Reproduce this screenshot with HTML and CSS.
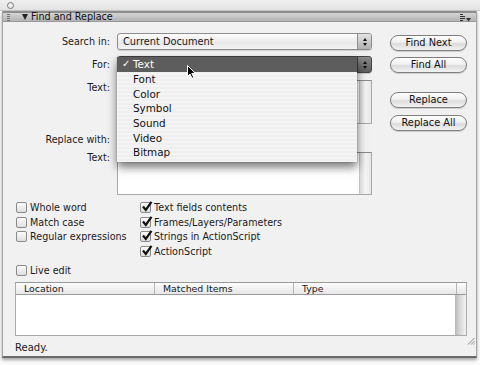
FILE: index.html
```html
<!DOCTYPE html>
<html>
<head>
<meta charset="utf-8">
<link rel="stylesheet" href="styles.css">
</head>
<body>
<div class="topstrip"><span class="dot"></span></div>
<div class="panel">
  <div class="titlebar">
    <span class="grip"></span>
    <span class="tri"></span>
    <span class="title">Find and Replace</span>
    <svg class="menuicon" width="11" height="8" viewBox="0 0 11 8">
      <path d="M0 0.5H3M0 2.5H5M0 4.5H5M0 6.5H3" stroke="#333" stroke-width="1"/>
      <path d="M6 4H11L8.5 7.5Z" fill="#333"/>
    </svg>
  </div>
  <div class="content">
    <div class="top">
      <div class="form">
        <div class="row r1"><span class="label">Search in:</span><div class="select"><span class="val">Current Document</span><span class="stepper"><i class="up"></i><i class="down"></i></span></div></div>
        <div class="row r2"><span class="label">For:</span><div class="select dark"><span class="val"></span><span class="stepper"><i class="up"></i><i class="down"></i></span></div></div>
        <div class="row r3"><span class="label">Text:</span><div class="textarea"><span class="vscroll"></span></div></div>
        <div class="row r4"><span class="label">Replace with:</span></div>
        <div class="row r5"><span class="label">Text:</span><div class="textarea"><span class="vscroll"></span></div></div>
        <div class="menu">
          <div class="item sel"><span class="check">✓</span>Text</div>
          <div class="item">Font</div>
          <div class="item">Color</div>
          <div class="item">Symbol</div>
          <div class="item">Sound</div>
          <div class="item">Video</div>
          <div class="item">Bitmap</div>
          <svg class="cursor" width="9" height="14" viewBox="0 0 9 14">
            <path d="M0.5 0.5V11.5L3 9L5 13.3L6.8 12.5L4.8 8.4H8.3Z" fill="#000" stroke="#fff" stroke-width="1"/>
          </svg>
        </div>
      </div>
      <div class="buttons">
        <div class="btn b1">Find Next</div>
        <div class="btn b2">Find All</div>
        <div class="btn b3">Replace</div>
        <div class="btn b4">Replace All</div>
      </div>
    </div>
    <div class="checks">
      <div class="col left">
        <div class="cb"><span class="box"></span>Whole word</div>
        <div class="cb"><span class="box"></span>Match case</div>
        <div class="cb"><span class="box"></span>Regular expressions</div>
      </div>
      <div class="col right">
        <div class="cb"><span class="box on"><svg width="12" height="12" viewBox="0 0 12 12"><path d="M2 5.5L4.8 9L10.5 0.8" fill="none" stroke="#111" stroke-width="2.2"/></svg></span>Text fields contents</div>
        <div class="cb"><span class="box on"><svg width="12" height="12" viewBox="0 0 12 12"><path d="M2 5.5L4.8 9L10.5 0.8" fill="none" stroke="#111" stroke-width="2.2"/></svg></span>Frames/Layers/Parameters</div>
        <div class="cb"><span class="box on"><svg width="12" height="12" viewBox="0 0 12 12"><path d="M2 5.5L4.8 9L10.5 0.8" fill="none" stroke="#111" stroke-width="2.2"/></svg></span>Strings in ActionScript</div>
        <div class="cb"><span class="box on"><svg width="12" height="12" viewBox="0 0 12 12"><path d="M2 5.5L4.8 9L10.5 0.8" fill="none" stroke="#111" stroke-width="2.2"/></svg></span>ActionScript</div>
      </div>
    </div>
    <div class="live"><div class="cb"><span class="box"></span>Live edit</div></div>
    <div class="table">
      <div class="thead">
        <span class="th c1">Location</span>
        <span class="th c2">Matched Items</span>
        <span class="th c3">Type</span>
        <span class="th c4"></span>
      </div>
      <div class="tbody"><span class="tscroll"></span></div>
    </div>
    <div class="status">Ready.</div>
    <svg class="resize" width="8" height="8" viewBox="0 0 8 8">
      <path d="M7.5 1L1 7.5M7.5 4L4 7.5M7.5 6.5L6.5 7.5" stroke="#888" stroke-width="1"/>
    </svg>
  </div>
</div>
</body>
</html>
```

FILE: styles.css
```css
* { box-sizing: border-box; }
html, body {
  margin: 0;
  padding: 0;
  background: #fafafa;
  font-family: "DejaVu Sans", "Liberation Sans", sans-serif;
  font-size: 9.6px;
  color: #1a1a1a;
  width: 480px;
  height: 365px;
  overflow: hidden;
}
.topstrip {
  height: 11px;
  background: linear-gradient(#f0f0f0, #e2e2e2);
  border-bottom: 1px solid #c8c8c8;
  padding: 2px 0 0 7px;
}
.dot {
  display: block;
  width: 7px;
  height: 7px;
  border-radius: 50%;
  border: 1px solid #777;
  background: #eee;
}
.panel {
  margin: 0 3px 0 2px;
  width: 475px;
  height: 347px;
  background: #f1f1f1;
  border-left: 1px solid #a4a4a4;
  border-right: 1px solid #a4a4a4;
  border-bottom: 2px solid #6a6a6a;
  box-shadow: 0 2px 3px rgba(0,0,0,0.35);
}
.titlebar {
  height: 11px;
  border-top: 2px solid #8c8c8c;
  background: linear-gradient(#d4d4d4, #b4b4b4);
  border-bottom: 1px solid #9a9a9a;
  display: flex;
  align-items: center;
  padding-left: 4px;
  position: relative;
}
.grip {
  width: 3px;
  height: 7px;
  background: repeating-linear-gradient(#777 0 1px, transparent 1px 2px);
  margin-right: 12px;
}
.tri {
  width: 0;
  height: 0;
  border-left: 3.5px solid transparent;
  border-right: 3.5px solid transparent;
  border-top: 6px solid #222;
  margin-right: 3px;
}
.title {
  font-size: 9.6px;
  color: #111;
  line-height: 8px;
}
.menuicon {
  position: absolute;
  right: 5px;
  top: 1px;
}
.content {
  position: relative;
  height: 324px;
}
.top {
  display: flex;
  padding-top: 11px;
}
.form {
  position: relative;
  width: 369px;
}
.row {
  display: flex;
  align-items: flex-start;
}
.label {
  width: 107px;
  text-align: right;
  flex: none;
  margin-right: 7px;
  line-height: 12px;
}
.r1, .r2 { height: 17px; align-items: center; }
.r2 { margin-top: 6px; }
.r3 { margin-top: 7px; }
.r3 .label { padding-top: 2px; }
.r4 { height: 28px; align-items: center; padding-top: 4px; }
.r5 .label { padding-top: 0px; margin-top: 0; }
.r5 .label { line-height: 12px; padding-top: 0; }
.select {
  width: 255px;
  height: 17px;
  border: 1px solid #8d8d8d;
  border-radius: 3px;
  background: linear-gradient(#ffffff, #e8e8e8 60%, #f4f4f4);
  display: flex;
  align-items: center;
  box-shadow: 0 1px 1px rgba(0,0,0,0.15);
}
.select .val {
  flex: 1;
  padding-left: 5px;
  font-size: 9.8px;
}
.select.dark {
  background: linear-gradient(#6a6a6a, #555);
  border-color: #444;
}
.stepper {
  width: 14px;
  height: 15px;
  border-left: 1px solid #8d8d8d;
  border-radius: 0 2px 2px 0;
  background: linear-gradient(#e4e4e4, #b0b0b0);
  display: flex;
  flex-direction: column;
  align-items: center;
  justify-content: center;
  gap: 2px;
}
.select.dark .stepper {
  background: linear-gradient(#8a8a8a, #5e5e5e);
  border-left-color: #444;
}
.up, .down {
  display: block;
  width: 0;
  height: 0;
  border-left: 2px solid transparent;
  border-right: 2px solid transparent;
}
.up { border-bottom: 3px solid #111; }
.down { border-top: 3px solid #111; }
.textarea {
  width: 255px;
  height: 44px;
  background: #fff;
  border: 1px solid #a8a8a8;
  border-top-color: #8a8a8a;
  display: flex;
  justify-content: flex-end;
}
.r5 .textarea { height: 43px; }
.vscroll {
  width: 12px;
  height: 100%;
  border-left: 1px solid #c4c4c4;
  background: linear-gradient(90deg, #d8d8d8, #f4f4f4 50%, #e6e6e6);
}
.menu {
  position: absolute;
  left: 114px;
  top: 24px;
  width: 240px;
  height: 105px;
  background: repeating-linear-gradient(#f4f4f4 0 2px, #efefef 2px 4px);
  box-shadow: 0 5px 9px rgba(0,0,0,0.55), 0 0 1px rgba(0,0,0,0.4);
  padding-top: 0;
}
.item {
  height: 14.7px;
  line-height: 14.7px;
  padding-left: 16px;
  font-size: 10.4px;
  color: #111;
  position: relative;
}
.item.sel {
  height: 15px;
  background: #5d5d5d;
  color: #fff;
}
.check {
  position: absolute;
  left: 5px;
  top: 0;
  font-size: 10px;
}
.cursor {
  position: absolute;
  left: 70px;
  top: 8px;
}
.buttons {
  margin-left: 18px;
  width: 77px;
  padding-top: 2px;
  display: flex;
  flex-direction: column;
}
.btn {
  height: 16px;
  border: 1px solid #7e7e7e;
  border-radius: 8px;
  background: linear-gradient(#ffffff, #f0f0f0 45%, #dcdcdc 55%, #f2f2f2);
  text-align: center;
  line-height: 14px;
  font-size: 9.8px;
  color: #111;
  box-shadow: 0 1px 1px rgba(0,0,0,0.15);
}
.b2 { margin-top: 6px; }
.b3 { margin-top: 19px; }
.b4 { margin-top: 7px; }
.checks {
  display: flex;
  padding-left: 13px;
  margin-top: 5px;
}
.col.left { width: 124px; }
.cb {
  height: 14.7px;
  display: flex;
  align-items: center;
  white-space: nowrap;
}
.box {
  width: 11px;
  height: 11px;
  border: 1px solid #8a8a8a;
  border-radius: 2px;
  background: linear-gradient(#fdfdfd, #dedede);
  margin-right: 3px;
  flex: none;
  position: relative;
}
.box svg {
  position: absolute;
  left: 0;
  top: -2px;
}
.live {
  padding-left: 13px;
  margin-top: 4px;
}
.table {
  margin: 5px 0 0 12px;
  width: 452px;
  border: 1px solid #aaa;
  border-top-color: #999;
}
.thead {
  display: flex;
  height: 12px;
  background: linear-gradient(#fdfdfd, #e6e6e6);
  border-bottom: 1px solid #9a9a9a;
}
.th {
  line-height: 11px;
  padding-left: 8px;
  border-right: 1px solid #b4b4b4;
  font-size: 9.4px;
}
.c1 { width: 139px; }
.c2 { width: 139px; }
.c3 { width: 163px; }
.c4 { width: 9px; border-right: none; }
.tbody {
  height: 40px;
  background: #fff;
  display: flex;
  justify-content: flex-end;
}
.tscroll {
  width: 11px;
  background: linear-gradient(90deg, #b8b8b8, #d4d4d4 40%, #f4f4f4);
}
.status {
  padding-left: 12px;
  margin-top: 6px;
  font-size: 10px;
  line-height: 12px;
}
.resize {
  position: absolute;
  right: 1px;
  bottom: 1px;
}
```
